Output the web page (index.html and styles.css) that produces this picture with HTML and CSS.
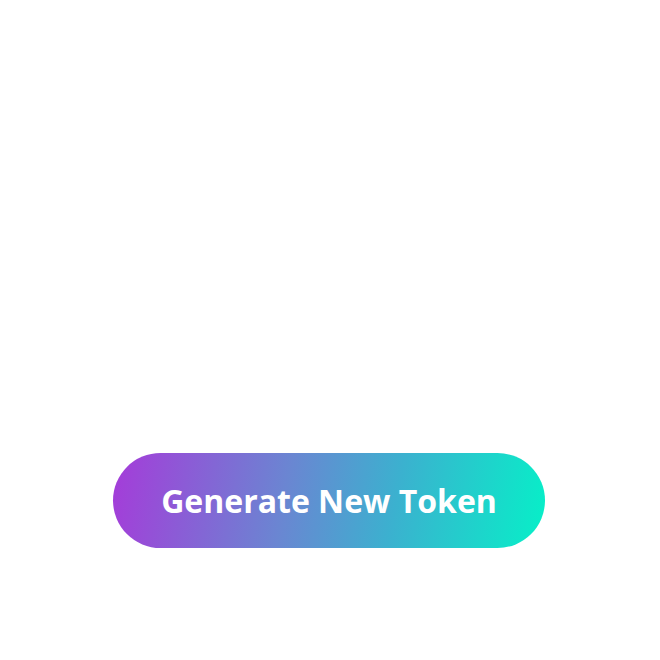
FILE: index.html
```html
<!DOCTYPE html>
<html lang="en">
<head>
<meta charset="utf-8">
<title>Generate New Token</title>
<link rel="stylesheet" href="styles.css">
</head>
<body>
<main class="page">
  <div class="spinner" aria-hidden="true">
    <svg width="60" height="70" viewBox="0 0 60 70" fill="none" stroke="#ffffff" stroke-width="3" stroke-linecap="round">
      <path d="M8 22 A24 24 0 0 1 52 20"/>
      <path d="M52 20 A24 24 0 0 1 40 52"/>
      <path d="M10 65 L25 50"/>
    </svg>
  </div>
  <button class="token-btn" type="button">Generate New Token</button>
</main>
</body>
</html>
```
FILE: styles.css
```css
html, body {
  margin: 0;
  padding: 0;
  background: #ffffff;
}
.page {
  height: 660px;
  display: flex;
  flex-direction: column;
  align-items: center;
  padding-top: 240px;
  box-sizing: border-box;
}
.spinner {
  height: 70px;
  margin-left: 34px;
}
.token-btn {
  margin-top: 143px;
  margin-left: -2px;
  width: 432px;
  height: 95px;
  border: none;
  border-radius: 48px;
  background: linear-gradient(100deg, #a53bd9 0%, #6a86d2 40%, #3bb1cf 65%, #06f0c8 100%);
  color: #ffffff;
  font-family: "Open Sans", "Liberation Sans", sans-serif;
  font-weight: 700;
  font-size: 32px;
  letter-spacing: 0;
  padding: 0;
  cursor: pointer;
}
```
